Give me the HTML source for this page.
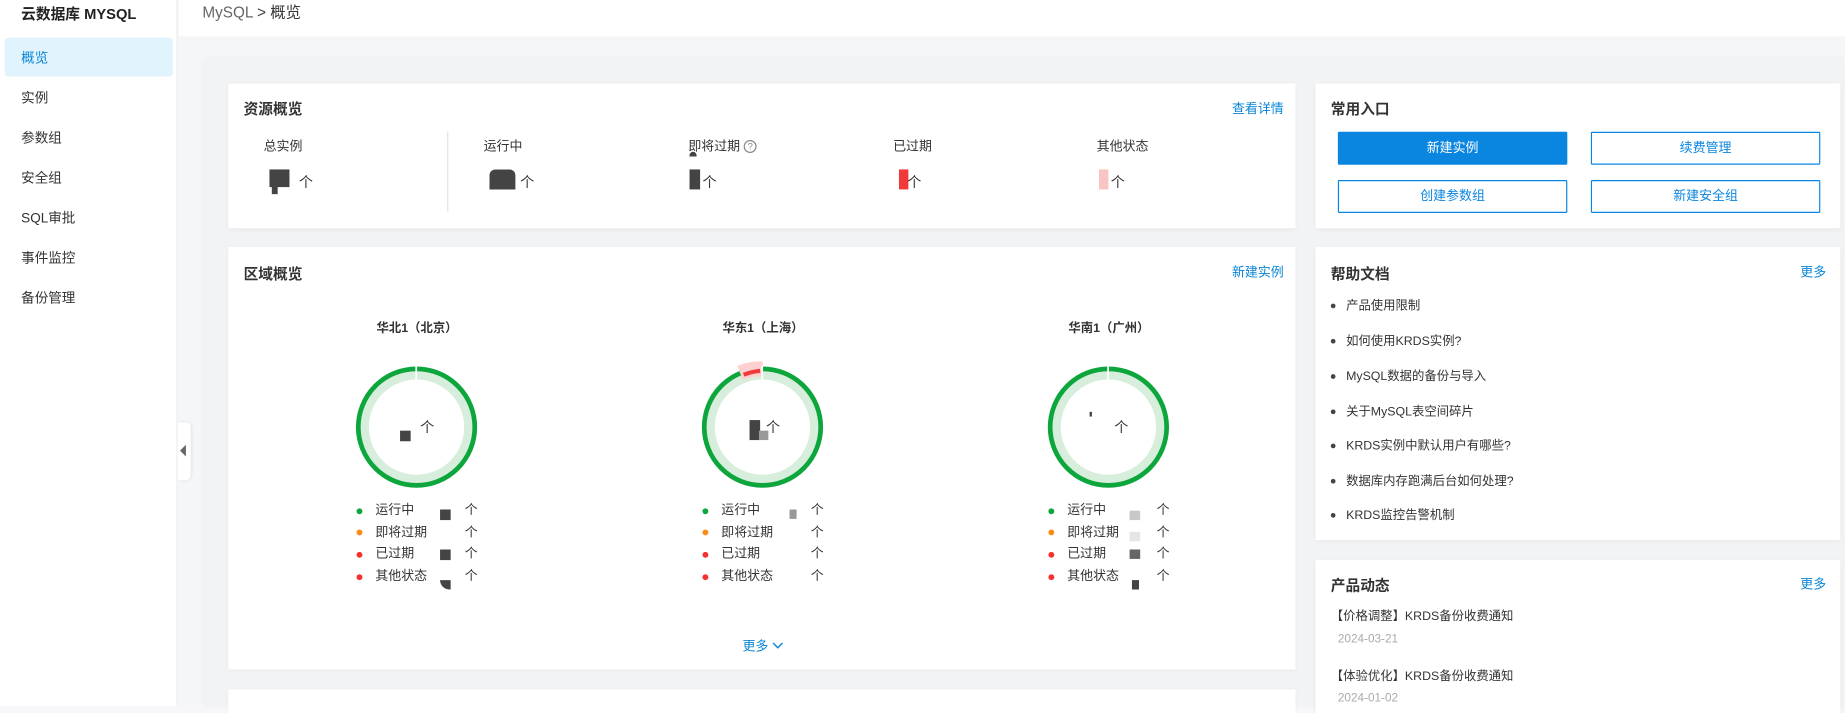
<!DOCTYPE html>
<html><head><meta charset="utf-8">
<style>
*{margin:0;padding:0;box-sizing:border-box}
html,body{width:1845px;height:701px;overflow:hidden;background:#f7f7f9}
#w{position:absolute;left:0;top:0;width:1568px;height:600px;transform:scale(1.17666);transform-origin:0 0;font-family:"Liberation Sans","Noto Sans CJK SC",sans-serif;color:#333;background:#f5f6f8}
.a{position:absolute;white-space:nowrap}
.card{position:absolute;background:#fff;box-shadow:0 1px 4px rgba(0,0,0,.05)}
.t{font-size:12.5px;font-weight:bold;color:#333}
.lk{color:#0a84d6;font-size:11px}
.nav{position:absolute;left:18px;font-size:11.5px;color:#333}
.lab{font-size:11px;color:#333}
.blk{position:absolute;background:#444}
.ge{font-size:12px;color:#333}
.dot{position:absolute;width:5px;height:5px;border-radius:50%}
.btn{position:absolute;width:195px;height:28px;border:1px solid #0a86e0;color:#0a86e0;font-size:11px;text-align:center;line-height:26px;border-radius:1px}
.hi{position:absolute;left:1144px;font-size:10.5px;color:#333}
.bu{position:absolute;left:1131px;width:4px;height:4px;border-radius:50%;background:#444}
</style></head><body><div id="w">
<div class="a" style="left:0;top:0;width:151px;height:600px;background:#fff;border-right:1px solid #ececec"></div>
<div class="a" style="left:18px;top:1px;font-size:12.5px;font-weight:bold;color:#222">云数据库 MYSQL</div>
<div class="a" style="left:4px;top:32px;width:143px;height:33px;background:#e1f4fd;border-radius:3px"></div>
<div class="nav" style="top:41px;color:#0a84d6">概览</div>
<div class="nav" style="top:75px">实例</div>
<div class="nav" style="top:109px">参数组</div>
<div class="nav" style="top:143px">安全组</div>
<div class="nav" style="top:177px">SQL审批</div>
<div class="nav" style="top:211px">事件监控</div>
<div class="nav" style="top:245px">备份管理</div>
<div class="a" style="left:152px;top:0;width:1416px;height:31px;background:#fff"></div>
<div class="a" style="left:172px;top:0px;font-size:13px;color:#666">MySQL <span style="color:#444">&gt;</span> <span style="color:#333">概览</span></div>
<div class="a" style="left:173px;top:50px;width:1395px;height:550px;background:#f2f3f5;box-shadow:0 0 4px rgba(0,0,0,.04)"></div>
<div class="a" style="left:151px;top:359px;width:11px;height:49px;background:#fff;border-radius:0 4px 4px 0;box-shadow:1px 0 3px rgba(0,0,0,.08)"></div>
<div class="a" style="left:153px;top:378px;width:0;height:0;border-top:5px solid transparent;border-bottom:5px solid transparent;border-right:5px solid #666"></div>
<div class="card" style="left:194px;top:71px;width:907px;height:123px"></div>
<div class="a t" style="left:207px;top:82px">资源概览</div>
<div class="a lk" style="left:1047px;top:84px">查看详情</div>
<div class="a" style="left:380px;top:112px;width:1px;height:68px;background:#e3e3e3"></div>
<div class="a lab" style="left:224px;top:116px">总实例</div>
<div class="a lab" style="left:411px;top:116px">运行中</div>
<div class="a lab" style="left:585px;top:116px">即将过期 <span style="display:inline-block;width:11px;height:11px;border:1px solid #888;border-radius:50%;font-size:8px;line-height:9px;text-align:center;color:#888;vertical-align:1px">?</span></div>
<div class="a lab" style="left:759px;top:116px">已过期</div>
<div class="a lab" style="left:932px;top:116px">其他状态</div>
<div class="blk" style="left:229px;top:144px;width:17px;height:15px"></div><div class="blk" style="left:231px;top:158px;width:5px;height:7px"></div><div class="a ge" style="left:254px;top:146px">个</div>
<div class="blk" style="left:416px;top:144px;width:22px;height:17px;border-radius:5px 5px 0 0"></div><div class="a ge" style="left:442px;top:146px">个</div>
<div class="blk" style="left:586px;top:129px;width:6px;height:4px;border-radius:4px 4px 0 0"></div><div class="blk" style="left:586px;top:144px;width:9px;height:17px"></div><div class="a ge" style="left:597px;top:146px">个</div>
<div class="blk" style="left:764px;top:144px;width:8px;height:17px;background:#f03a3a"></div><div class="a ge" style="left:771px;top:146px">个</div>
<div class="blk" style="left:934px;top:144px;width:8px;height:17px;background:#f8c4c4"></div><div class="a ge" style="left:944px;top:146px">个</div>
<div class="card" style="left:194px;top:210px;width:907px;height:359px"></div>
<div class="a t" style="left:207px;top:222px">区域概览</div>
<div class="a lk" style="left:1047px;top:223px">新建实例</div>
<svg class="a" style="left:194px;top:210px" width="907" height="359" viewBox="194 210 907 359">
<g fill="none">
<circle cx="354" cy="363" r="45" stroke="#d6eedb" stroke-width="9"/>
<circle cx="354" cy="363" r="49.5" stroke="#0ca63c" stroke-width="4"/>
<circle cx="648" cy="363" r="45" stroke="#d6eedb" stroke-width="9"/>
<circle cx="648" cy="363" r="49.5" stroke="#0ca63c" stroke-width="4"/>
<path d="M629 317 A49.5 49.5 0 0 1 648 313.5" stroke="#ffd0d0" stroke-width="13"/>
<path d="M632 318.5 A48 48 0 0 1 646 315.2" stroke="#f03a3a" stroke-width="3.5"/>
<circle cx="942" cy="363" r="45" stroke="#d6eedb" stroke-width="9"/>
<circle cx="942" cy="363" r="49.5" stroke="#0ca63c" stroke-width="4"/>
</g>
<g fill="#fff"><rect x="353" y="311" width="1.5" height="12"/><rect x="647" y="311" width="1.5" height="12"/><rect x="941" y="311" width="1.5" height="12"/></g>
</svg>
<div class="a" style="left:320px;top:271px;font-size:10.5px;font-weight:bold">华北1（北京）</div>
<div class="a" style="left:614px;top:271px;font-size:10.5px;font-weight:bold">华东1（上海）</div>
<div class="a" style="left:908px;top:271px;font-size:10.5px;font-weight:bold">华南1（广州）</div>
<div class="blk" style="left:340px;top:366px;width:9px;height:9px"></div><div class="a ge" style="left:357px;top:354px">个</div>
<div class="blk" style="left:637px;top:357px;width:9px;height:17px"></div><div class="blk" style="left:645px;top:366px;width:8px;height:8px;background:#999"></div><div class="a ge" style="left:651px;top:354px">个</div>
<div class="blk" style="left:926px;top:350px;width:1.5px;height:4px"></div><div class="a ge" style="left:947px;top:354px">个</div>
<div class="dot" style="left:303px;top:432px;background:#0ca63c"></div><div class="dot" style="left:303px;top:450px;background:#fa8c16"></div><div class="dot" style="left:303px;top:469px;background:#f5312e"></div><div class="dot" style="left:303px;top:488px;background:#f5312e"></div>
<div class="dot" style="left:597px;top:432px;background:#0ca63c"></div><div class="dot" style="left:597px;top:450px;background:#fa8c16"></div><div class="dot" style="left:597px;top:469px;background:#f5312e"></div><div class="dot" style="left:597px;top:488px;background:#f5312e"></div>
<div class="dot" style="left:891px;top:432px;background:#0ca63c"></div><div class="dot" style="left:891px;top:450px;background:#fa8c16"></div><div class="dot" style="left:891px;top:469px;background:#f5312e"></div><div class="dot" style="left:891px;top:488px;background:#f5312e"></div>
<div class="a lab" style="left:319px;top:425px;line-height:18.5px">运行中<br>即将过期<br>已过期<br>其他状态</div>
<div class="a lab" style="left:613px;top:425px;line-height:18.5px">运行中<br>即将过期<br>已过期<br>其他状态</div>
<div class="a lab" style="left:907px;top:425px;line-height:18.5px">运行中<br>即将过期<br>已过期<br>其他状态</div>
<div class="a ge" style="left:395px;top:425px;line-height:18.5px;font-size:11px">个<br>个<br>个<br>个</div>
<div class="a ge" style="left:689px;top:425px;line-height:18.5px;font-size:11px">个<br>个<br>个<br>个</div>
<div class="a ge" style="left:983px;top:425px;line-height:18.5px;font-size:11px">个<br>个<br>个<br>个</div>
<div class="blk" style="left:374px;top:433px;width:9px;height:9px"></div><div class="blk" style="left:374px;top:467px;width:9px;height:9px"></div><div class="blk" style="left:374px;top:493px;width:9px;height:8px;border-radius:0 0 0 8px"></div>
<div class="blk" style="left:671px;top:433px;width:6px;height:8px;background:#999"></div>
<div class="blk" style="left:960px;top:434px;width:9px;height:8px;background:#c8c8c8"></div><div class="blk" style="left:960px;top:452px;width:9px;height:8px;background:#e5e5e5"></div><div class="blk" style="left:960px;top:467px;width:9px;height:8px;background:#666"></div><div class="blk" style="left:962px;top:493px;width:6px;height:8px"></div>
<div class="a lk" style="left:631px;top:541px">更多 <svg width="10" height="7" viewBox="0 0 10 7" style="vertical-align:1px"><path d="M1 1.5 L5 5.5 L9 1.5" stroke="#0a84d6" fill="none" stroke-width="1.2"/></svg></div>
<div class="card" style="left:194px;top:586px;width:907px;height:20px"></div>
<div class="card" style="left:1118px;top:71px;width:446px;height:123px"></div>
<div class="a t" style="left:1131px;top:82px">常用入口</div>
<div class="btn" style="left:1137px;top:112px;background:#0a86e0;color:#fff">新建实例</div>
<div class="btn" style="left:1352px;top:112px">续费管理</div>
<div class="btn" style="left:1137px;top:153px">创建参数组</div>
<div class="btn" style="left:1352px;top:153px">新建安全组</div>
<div class="card" style="left:1118px;top:210px;width:446px;height:249px"></div>
<div class="a t" style="left:1131px;top:222px">帮助文档</div>
<div class="a lk" style="left:1530px;top:223px">更多</div>
<div class="bu" style="top:258px"></div><div class="hi" style="top:252px">产品使用限制</div>
<div class="bu" style="top:288px"></div><div class="hi" style="top:282px">如何使用KRDS实例?</div>
<div class="bu" style="top:318px"></div><div class="hi" style="top:312px">MySQL数据的备份与导入</div>
<div class="bu" style="top:348px"></div><div class="hi" style="top:342px">关于MySQL表空间碎片</div>
<div class="bu" style="top:377px"></div><div class="hi" style="top:371px">KRDS实例中默认用户有哪些?</div>
<div class="bu" style="top:407px"></div><div class="hi" style="top:401px">数据库内存跑满后台如何处理?</div>
<div class="bu" style="top:436px"></div><div class="hi" style="top:430px">KRDS监控告警机制</div>
<div class="card" style="left:1118px;top:476px;width:446px;height:130px"></div>
<div class="a t" style="left:1131px;top:487px">产品动态</div>
<div class="a lk" style="left:1530px;top:488px">更多</div>
<div class="a" style="left:1131px;top:516px;font-size:10.5px">【价格调整】KRDS备份收费通知</div>
<div class="a" style="left:1137px;top:538px;font-size:10px;color:#aaa">2024-03-21</div>
<div class="a" style="left:1131px;top:567px;font-size:10.5px">【体验优化】KRDS备份收费通知</div>
<div class="a" style="left:1137px;top:588px;font-size:10px;color:#aaa">2024-01-02</div>
</div></body></html>
